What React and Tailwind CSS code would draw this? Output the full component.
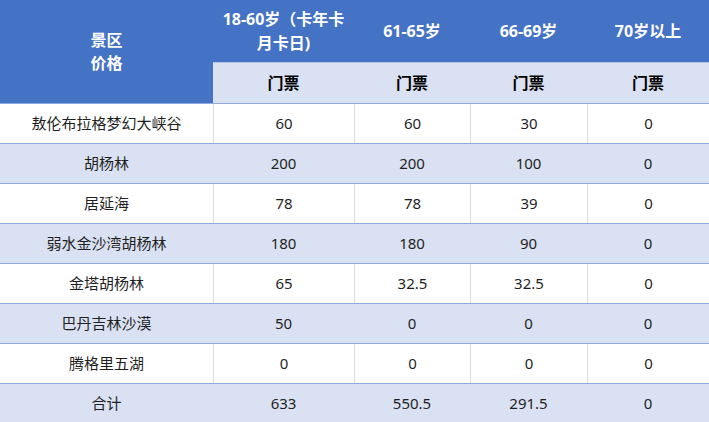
const ages = [
  { key: 'a', label: ['18-60岁（卡年卡', '月卡日)'] },
  { key: 'b', label: ['61-65岁'] },
  { key: 'c', label: ['66-69岁'] },
  { key: 'd', label: ['70岁以上'] },
];

const rows = [
  ['敖伦布拉格梦幻大峡谷', '60', '60', '30', '0'],
  ['胡杨林', '200', '200', '100', '0'],
  ['居延海', '78', '78', '39', '0'],
  ['弱水金沙湾胡杨林', '180', '180', '90', '0'],
  ['金塔胡杨林', '65', '32.5', '32.5', '0'],
  ['巴丹吉林沙漠', '50', '0', '0', '0'],
  ['腾格里五湖', '0', '0', '0', '0'],
  ['合计', '633', '550.5', '291.5', '0'],
];

const cols = 'grid grid-cols-[213px_141px_116px_117px_122px]';

export default function App() {
  return (
    <div
      className="w-[709px] h-[422px] overflow-hidden bg-white text-[#1f1f1f]"
      style={{ fontFamily: '"Noto Sans", "Noto Sans CJK SC", sans-serif' }}
    >
      {/* header */}
      <div className={`${cols} grid-rows-[62px_41px]`}>
        <div className="row-span-2 bg-[#4472C4] flex flex-col items-center justify-center text-white font-bold text-[16px] leading-[23px]">
          <span>景区</span>
          <span>价格</span>
        </div>
        {ages.map((a) => (
          <div
            key={a.key}
            className="bg-[#4472C4] flex flex-col items-center justify-center text-white font-bold text-[16px] leading-[24px]"
          >
            {a.label.map((l) => (
              <span key={l}>{l}</span>
            ))}
          </div>
        ))}
        {ages.map((a) => (
          <div
            key={a.key + 't'}
            className="bg-[#D9E1F2] border-t border-[#B4C6E7] flex items-center justify-center font-bold text-[16px] text-black"
          >
            门票
          </div>
        ))}
      </div>

      {/* body */}
      {rows.map((r, i) => {
        const shaded = i % 2 === 1;
        return (
          <div
            key={r[0]}
            className={`${cols} h-[40px] border-t border-[#8EA9DB] ${shaded ? 'bg-[#D9E1F2]' : 'bg-white'}`}
          >
            {r.map((c, j) => (
              <div
                key={j}
                className={`flex items-center justify-center text-[15px] ${
                  j > 0 && !shaded ? 'border-l border-[#DCDCDC]' : ''
                }`}
              >
                {c}
              </div>
            ))}
          </div>
        );
      })}
    </div>
  );
}
